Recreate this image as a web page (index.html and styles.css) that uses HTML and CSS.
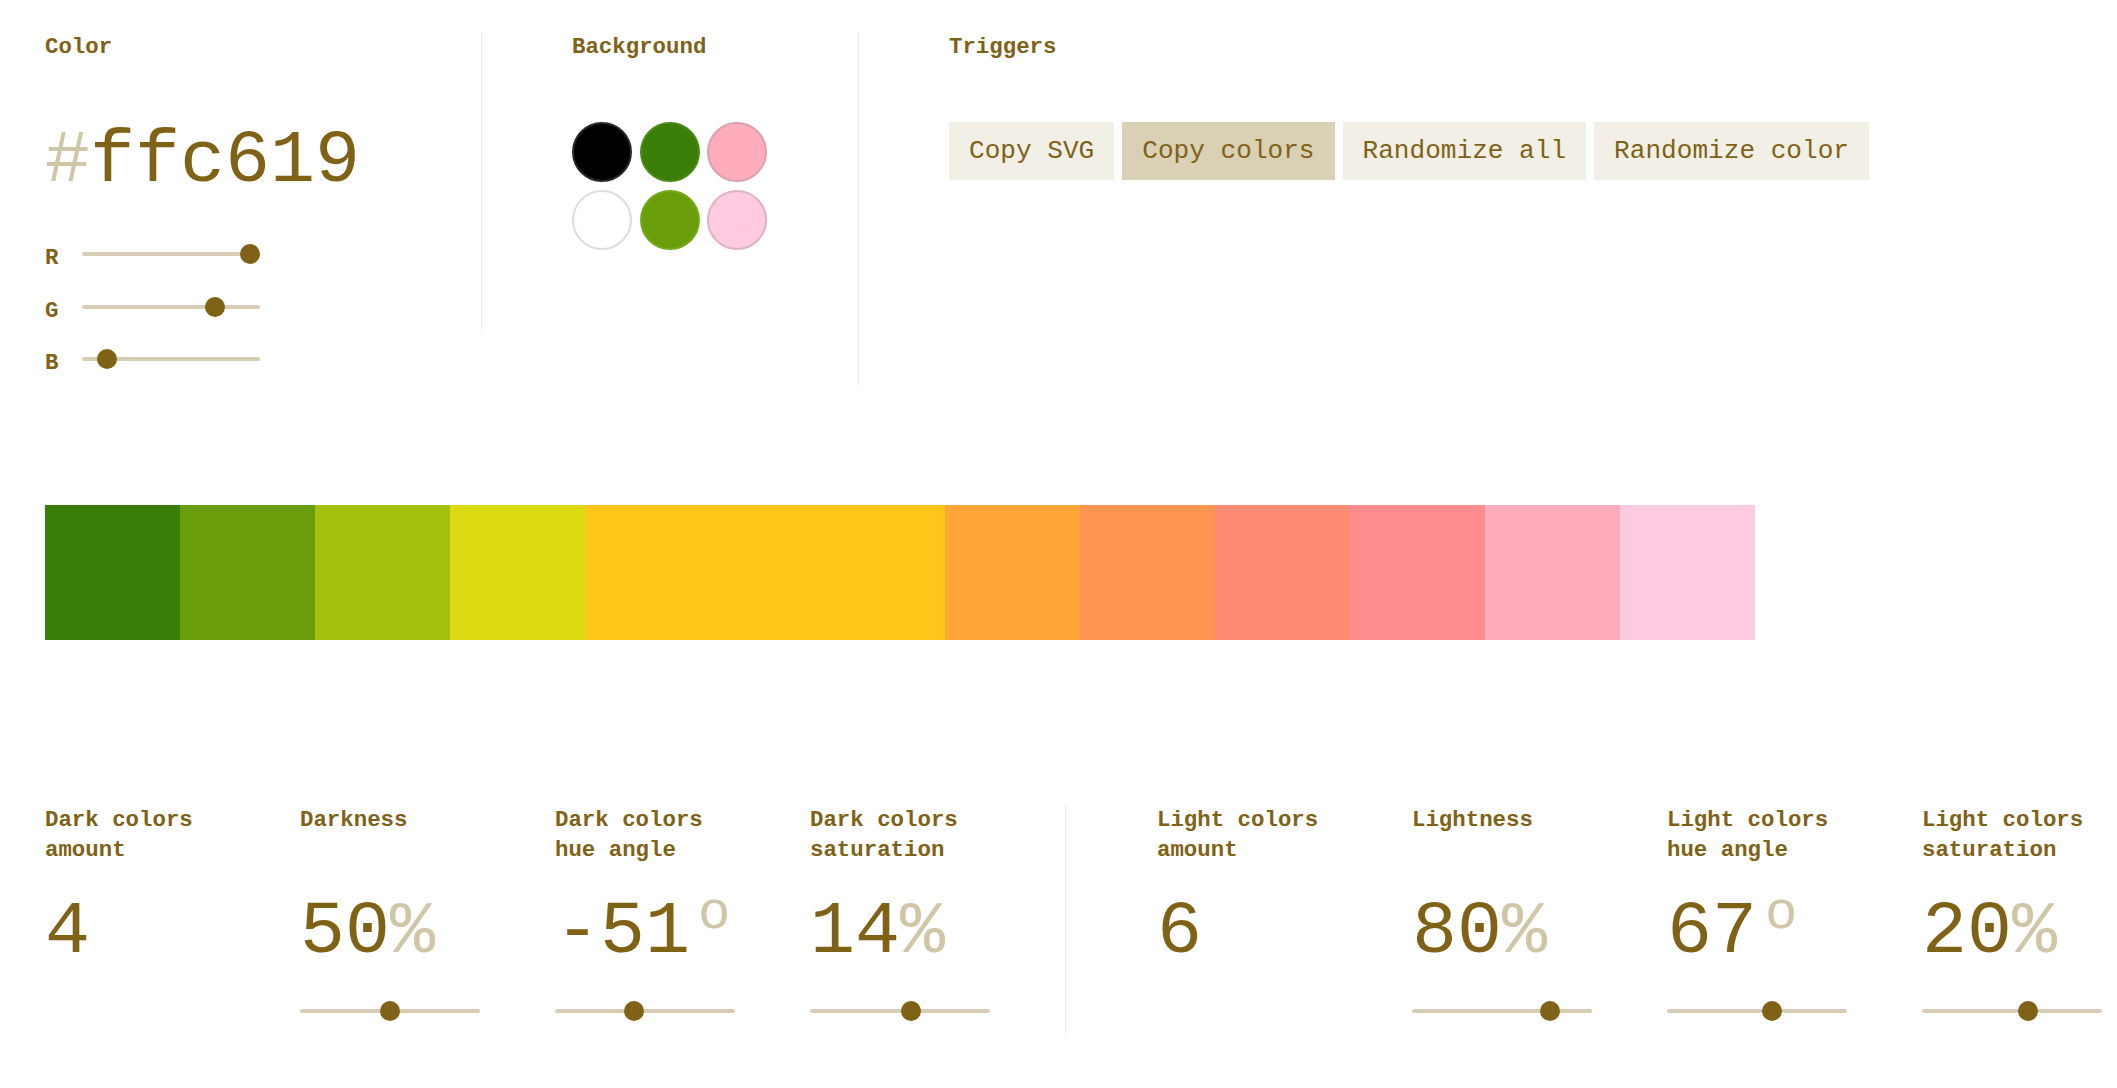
FILE: index.html
```html
<!DOCTYPE html>
<html lang="en">
<head>
<meta charset="utf-8">
<title>Palette generator</title>
<link rel="stylesheet" href="styles.css">
</head>
<body>
<div class="top">
  <section class="col col-color">
    <h2 class="label">Color</h2>
    <div class="hex"><span class="unit">#</span>ffc619</div>
    <div class="rgb">
      <div class="rgb-row"><span class="rgb-label">R</span><input class="slider rgb-slider" type="range" min="0" max="255" value="255"></div>
      <div class="rgb-row"><span class="rgb-label">G</span><input class="slider rgb-slider" type="range" min="0" max="255" value="198"></div>
      <div class="rgb-row"><span class="rgb-label">B</span><input class="slider rgb-slider" type="range" min="0" max="255" value="25"></div>
    </div>
  </section>
  <div class="divider divider-1"></div>
  <section class="col col-bg">
    <h2 class="label">Background</h2>
    <div class="circles">
      <span class="circle c-black"></span>
      <span class="circle c-green"></span>
      <span class="circle c-pink"></span>
      <span class="circle c-white"></span>
      <span class="circle c-green2"></span>
      <span class="circle c-pink2"></span>
    </div>
  </section>
  <div class="divider divider-2"></div>
  <section class="col col-triggers">
    <h2 class="label">Triggers</h2>
    <div class="buttons">
      <button class="btn">Copy SVG</button>
      <button class="btn btn-active">Copy colors</button>
      <button class="btn">Randomize all</button>
      <button class="btn">Randomize color</button>
    </div>
  </section>
</div>

<div class="palette">
  <div class="swatch s1"></div>
  <div class="swatch s2"></div>
  <div class="swatch s3"></div>
  <div class="swatch s4"></div>
  <div class="swatch base"></div>
  <div class="swatch s6"></div>
  <div class="swatch s7"></div>
  <div class="swatch s8"></div>
  <div class="swatch s9"></div>
  <div class="swatch s10"></div>
  <div class="swatch s11"></div>
</div>

<div class="bottom">
  <div class="group">
    <div class="param">
      <h3 class="label plabel">Dark colors amount</h3>
      <div class="num">4</div>
    </div>
    <div class="param">
      <h3 class="label plabel">Darkness</h3>
      <div class="num">50<span class="unit">%</span></div>
      <input class="slider pslider" type="range" min="0" max="100" value="50">
    </div>
    <div class="param">
      <h3 class="label plabel">Dark colors hue angle</h3>
      <div class="num">-51<sup class="unit deg">o</sup></div>
      <input class="slider pslider" type="range" min="-360" max="360" value="-51">
    </div>
    <div class="param">
      <h3 class="label plabel">Dark colors saturation</h3>
      <div class="num">14<span class="unit">%</span></div>
      <input class="slider pslider" type="range" min="-100" max="100" value="14">
    </div>
  </div>
  <div class="bdivider"></div>
  <div class="group">
    <div class="param">
      <h3 class="label plabel">Light colors amount</h3>
      <div class="num">6</div>
    </div>
    <div class="param">
      <h3 class="label plabel">Lightness</h3>
      <div class="num">80<span class="unit">%</span></div>
      <input class="slider pslider" type="range" min="0" max="100" value="80">
    </div>
    <div class="param">
      <h3 class="label plabel">Light colors hue angle</h3>
      <div class="num">67<sup class="unit deg">o</sup></div>
      <input class="slider pslider" type="range" min="-360" max="360" value="67">
    </div>
    <div class="param">
      <h3 class="label plabel">Light colors saturation</h3>
      <div class="num">20<span class="unit">%</span></div>
      <input class="slider pslider" type="range" min="-100" max="100" value="20">
    </div>
  </div>
</div>
</body>
</html>
```

FILE: styles.css
```css
* { box-sizing: border-box; }

html, body {
  margin: 0;
  background: #ffffff;
}

body {
  padding: 32px 0 0 45px;
  font-family: "Liberation Mono", "Courier New", monospace;
  color: #806216;
  overflow: hidden;
}

.label {
  margin: 0;
  font-size: 22.4px;
  line-height: 30px;
  font-weight: bold;
  color: #806216;
}

/* ---------- top ---------- */
.top {
  display: flex;
  align-items: flex-start;
}

.col .label {
  margin-bottom: 60px;
}

.col-color { width: 436px; }
.col-bg { width: 286px; margin-left: 90px; }
.col-triggers { margin-left: 90px; }

.divider {
  width: 1px;
  background: #f1ede2;
}
.divider-1 { height: 300px; }
.divider-2 { height: 353px; }

.hex {
  font-size: 75px;
  line-height: 80px;
  height: 80px;
  white-space: nowrap;
}

.unit { color: #cfc5a7; }

.rgb {
  display: flex;
  flex-direction: column;
  gap: 22.5px;
  margin-top: 41px;
}

.rgb-row {
  display: flex;
  align-items: flex-start;
  height: 30px;
}

.rgb-label {
  width: 37px;
  font-size: 22.4px;
  line-height: 30px;
  font-weight: bold;
}

.slider {
  -webkit-appearance: none;
  appearance: none;
  display: block;
  height: 20px;
  margin: 0;
  padding: 0;
  background: transparent;
}
.slider::-webkit-slider-runnable-track {
  height: 4px;
  background: #d6cdb4;
  border-radius: 2px;
}
.slider::-webkit-slider-thumb {
  -webkit-appearance: none;
  appearance: none;
  width: 20px;
  height: 20px;
  margin-top: -8px;
  border: none;
  border-radius: 50%;
  background: #806216;
}

.rgb-slider {
  width: 178px;
  margin-top: 1px;
}

.circles {
  display: grid;
  grid-template-columns: repeat(3, 60px);
  gap: 8px 7.5px;
}
.circle {
  display: block;
  width: 60px;
  height: 60px;
  border-radius: 50%;
  border: 2px solid rgba(0, 0, 0, 0.12);
}
.c-black { background: #000000; border-color: #2a2a2a; }
.c-green { background: #3b7e07; border-color: #4a8a17; }
.c-pink { background: #ffadbc; border-color: #dca0ad; }
.c-white { background: #ffffff; border-color: #dddddd; }
.c-green2 { background: #699e0a; border-color: #77aa18; }
.c-pink2 { background: #ffcbe0; border-color: #ddb1c6; }

.buttons {
  display: flex;
  gap: 8px;
}
.btn {
  height: 58px;
  padding: 0 20px;
  border: none;
  background: #f2efe6;
  color: #806216;
  font-family: "Liberation Mono", "Courier New", monospace;
  font-size: 26.1px;
  line-height: 58px;
  white-space: nowrap;
}
.btn-active { background: #d9d0b5; }

/* ---------- palette ---------- */
.palette {
  display: flex;
  margin-top: 120px;
  height: 135px;
}
.swatch { width: 135px; height: 135px; }
.swatch.base { width: 360px; }
.s1 { background: #3b7e07; }
.s2 { background: #699e0a; }
.s3 { background: #a5c10e; }
.s4 { background: #dcdb11; }
.base { background: #ffc619; }
.s6 { background: #ffa537; }
.s7 { background: #ff9553; }
.s8 { background: #ff8b72; }
.s9 { background: #ff8c8e; }
.s10 { background: #ffadbc; }
.s11 { background: #ffcbe0; }

/* ---------- bottom ---------- */
.bottom {
  display: flex;
  align-items: flex-start;
  margin-top: 165px;
}
.group {
  display: flex;
  gap: 75px;
}
.param { width: 180px; }
.plabel { height: 60px; }
.num {
  margin-top: 28px;
  font-size: 75px;
  line-height: 80px;
  height: 80px;
  white-space: nowrap;
}
.deg {
  font-size: 54px;
  line-height: 0;
  vertical-align: 24px;
  margin-left: 8px;
}
.pslider {
  width: 180px;
  margin-top: 28px;
}
.bdivider {
  width: 1px;
  height: 232px;
  margin: 0 91px 0 75px;
  background: #f1ede2;
}
```
